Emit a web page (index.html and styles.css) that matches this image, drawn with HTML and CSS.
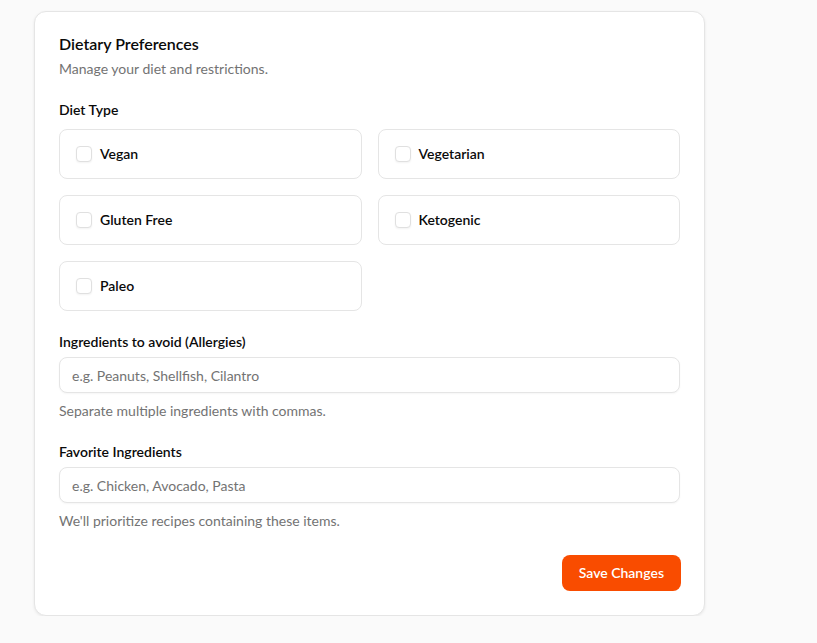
FILE: index.html
```html
<!DOCTYPE html>
<html lang="en">
<head>
<meta charset="utf-8">
<title>Dietary Preferences</title>
<link rel="stylesheet" href="styles.css">
</head>
<body>
<main class="page">
  <form class="card">
    <header class="card-head">
      <h2 class="card-title">Dietary Preferences</h2>
      <p class="card-desc">Manage your diet and restrictions.</p>
    </header>

    <section class="field field-diet">
      <h3 class="field-label">Diet Type</h3>
      <div class="diet-grid">
        <label class="diet-option"><input type="checkbox" class="check"><span>Vegan</span></label>
        <label class="diet-option"><input type="checkbox" class="check"><span>Vegetarian</span></label>
        <label class="diet-option"><input type="checkbox" class="check"><span>Gluten Free</span></label>
        <label class="diet-option"><input type="checkbox" class="check"><span>Ketogenic</span></label>
        <label class="diet-option"><input type="checkbox" class="check"><span>Paleo</span></label>
      </div>
    </section>

    <section class="field">
      <label class="field-label" for="avoid">Ingredients to avoid (Allergies)</label>
      <input id="avoid" class="text-input" type="text" placeholder="e.g. Peanuts, Shellfish, Cilantro">
      <p class="hint">Separate multiple ingredients with commas.</p>
    </section>

    <section class="field">
      <label class="field-label" for="fav">Favorite Ingredients</label>
      <input id="fav" class="text-input" type="text" placeholder="e.g. Chicken, Avocado, Pasta">
      <p class="hint">We'll prioritize recipes containing these items.</p>
    </section>

    <div class="actions">
      <button type="button" class="btn-primary">Save Changes</button>
    </div>
  </form>
</main>
</body>
</html>
```

FILE: styles.css
```css
* {
  box-sizing: border-box;
}

html, body {
  margin: 0;
  padding: 0;
  background: #fafafa;
}

body {
  font-family: "Lato", "Open Sans", "Liberation Sans", sans-serif;
  color: #0a0a0a;
  font-size: 14px;
}

.page {
  padding: 11px 0 0 34px;
}

.card {
  width: 671px;
  background: #ffffff;
  border: 1px solid #e5e5e5;
  border-radius: 12px;
  box-shadow: 0 1px 3px rgba(0, 0, 0, 0.08);
  padding: 24px;
  display: flex;
  flex-direction: column;
  gap: 24px;
}

.card-head {
  display: flex;
  flex-direction: column;
  gap: 8px;
}

.card-title {
  margin: 0;
  font-size: 16px;
  line-height: 15px;
  font-weight: 600;
}

.card-desc {
  margin: 0;
  font-size: 14px;
  line-height: 20px;
  color: #737373;
}

.field {
  display: flex;
  flex-direction: column;
  gap: 8px;
}

.field-diet {
  gap: 12px;
}

.field-label {
  margin: 0;
  display: block;
  font-size: 14px;
  line-height: 14px;
  font-weight: 600;
}

.diet-grid {
  display: grid;
  grid-template-columns: 1fr 1fr;
  gap: 16px;
}

.diet-option {
  height: 50px;
  border: 1px solid #e5e5e5;
  border-radius: 8px;
  padding: 0 16px 1px;
  display: flex;
  align-items: center;
  gap: 8px;
  font-weight: 600;
  font-size: 14px;
}

.check {
  appearance: none;
  margin: 0;
  width: 16px;
  height: 16px;
  border: 1px solid #e0e0e0;
  border-radius: 4px;
  box-shadow: 0 1px 2px rgba(0, 0, 0, 0.05);
  background: #fff;
}

.text-input {
  height: 36px;
  width: 100%;
  border: 1px solid #e5e5e5;
  border-radius: 8px;
  padding: 0 12px;
  font: inherit;
  font-size: 14px;
  color: #0a0a0a;
  box-shadow: 0 1px 2px rgba(0, 0, 0, 0.04);
  outline: none;
}

.text-input::placeholder {
  color: #737373;
}

.hint {
  margin: 0;
  font-size: 14px;
  line-height: 20px;
  color: #737373;
}

.actions {
  display: flex;
  justify-content: flex-end;
}

.btn-primary {
  height: 36px;
  padding: 0 17px 1px;
  margin-right: -1px;
  border: none;
  border-radius: 8px;
  background: #f94c00;
  color: #fff;
  font: inherit;
  font-size: 14px;
  font-weight: 600;
}
```
